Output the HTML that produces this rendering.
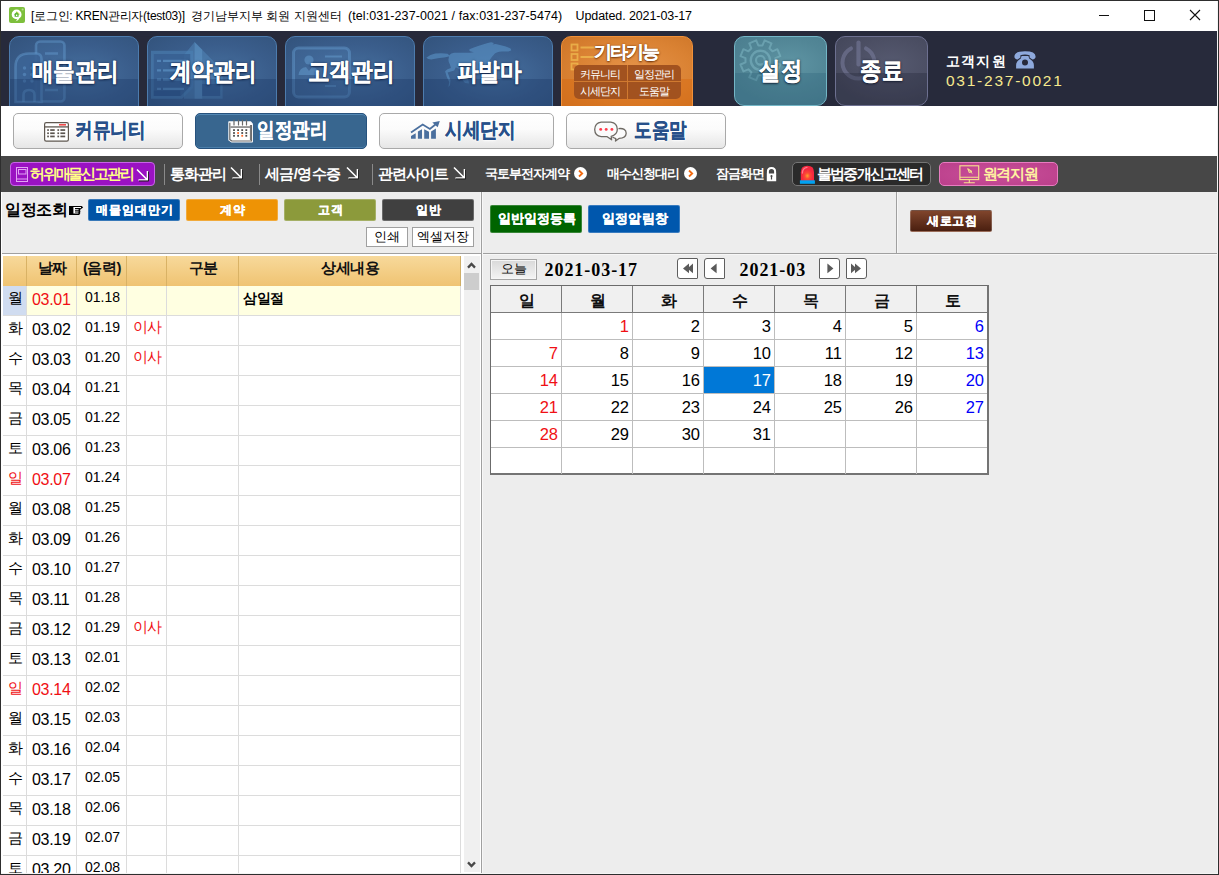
<!DOCTYPE html>
<html lang="ko">
<head>
<meta charset="utf-8">
<title>KREN</title>
<style>
*{box-sizing:border-box;margin:0;padding:0}
html,body{width:1219px;height:875px;overflow:hidden}
body{position:relative;background:#ededed;font-family:"Liberation Sans",sans-serif;color:#000;font-size:14px}
.a{position:absolute;white-space:nowrap}
.c{text-align:center}
.b{font-weight:bold}
/* window frame */
#frame{left:0;top:0;width:1219px;height:875px;border:1px solid #2e2e2e;z-index:50;pointer-events:none;box-shadow:inset -1px -1px 0 #f4f4f4}
#titlebar{left:1px;top:1px;width:1217px;height:30px;background:#fff}
#titletext{left:31px;top:9px;font-size:12px;line-height:15px;color:#000;letter-spacing:0px}
/* nav band */
#nav{left:1px;top:31px;width:1217px;height:75px;background:#272a3b;overflow:hidden}
.nb{top:5px;width:130px;height:86px;border-radius:10px;border:1px solid #4d7cae;overflow:hidden;
  background:radial-gradient(ellipse 70% 60% at 55% 45%,#46709f 0%,#3a5d8b 60%,#34557f 100%)}
.nb .lo{left:0;top:42px;width:130px;height:43px;background:rgba(25,55,100,.35)}
.nb .t{left:1px;top:18px;width:128px;font-size:25px;line-height:32px;font-weight:bold;color:#fff;letter-spacing:0;transform:scaleX(.865);-webkit-text-stroke:.3px #fff;
  text-shadow:0 1px 2px rgba(10,25,60,.9),0 0 3px rgba(10,25,60,.6)}

/* orange etc */
#ob{left:560px;top:5px;width:132px;height:86px;border-radius:10px;border:1px solid #f09038;overflow:hidden;
  background:radial-gradient(ellipse 75% 65% at 55% 42%,#e6944a 0%,#da8233 60%,#cc7427 100%)}
#ob .lo{left:0;top:42px;width:133px;height:43px;background:rgba(215,105,15,.45)}
#ob .t{left:0;top:4px;width:130px;font-size:18px;line-height:22px;font-weight:bold;color:#fff;letter-spacing:-2px;text-indent:-2px;-webkit-text-stroke:.25px #fff;text-shadow:0 1px 2px rgba(90,35,0,.9),0 0 2px rgba(90,35,0,.7)}
#ob .bx{left:12px;top:28px;width:107px;height:34px;border-radius:5px;background:#a2521f}
#ob .bx .h{left:0;top:16px;width:108px;height:1px;background:#d07a30}
#ob .bx .v{left:53px;top:0;width:1px;height:35px;background:#d07a30}
#ob .bx .s{font-size:11px;line-height:14px;color:#fff;letter-spacing:-1px;text-indent:-1px;width:53px;text-align:center}
.rb{top:5px;width:93px;height:70px;border-radius:10px;overflow:hidden}
.rb .t{left:0;top:16.5px;width:91px;font-size:25px;line-height:32px;font-weight:bold;color:#fff;letter-spacing:0;transform:scaleX(.85);-webkit-text-stroke:.3px #fff;text-align:center;
  text-shadow:0 1px 2px rgba(10,20,40,.9),0 0 3px rgba(10,20,40,.6)}
#setb{left:733px;border:1px solid #74b6c6;background:radial-gradient(ellipse 70% 60% at 60% 40%,#5f95a4 0%,#528696 60%,#4c7f90 100%)}
#setb .lo{left:0;top:36px;width:94px;height:34px;background:rgba(40,95,120,.28)}
#endb{left:834px;border:1px solid #6d7090;background:radial-gradient(ellipse 70% 60% at 60% 40%,#565a70 0%,#4c4f64 60%,#45485c 100%)}
#endb .lo{left:0;top:36px;width:94px;height:34px;background:rgba(25,28,45,.28)}
#cs1{left:945px;top:21px;font-size:14px;line-height:18px;font-weight:bold;color:#fff;letter-spacing:1.2px}
#cs2{left:945px;top:41px;font-size:15.5px;line-height:18px;color:#f6e98e;letter-spacing:1.75px}

/* menu items */
#pb{left:9px;top:6px;width:145px;height:24px;border-radius:4px;border:1px solid #c765e6;background:#9a12c2}
#pb .t{left:19px;top:1px;font-size:15px;line-height:20px;font-weight:bold;color:#ffff86;letter-spacing:-2.2px}
#il{left:791px;top:6px;width:139px;height:24px;border-radius:5px;border:1px solid #757575;background:#2a2a2a}
#il .t{left:24px;top:1px;font-size:15px;line-height:20px;font-weight:bold;color:#fff;letter-spacing:-1.8px}
#rs{left:938px;top:6px;width:119px;height:24px;border-radius:5px;border:1px solid #e87cc0;background:radial-gradient(ellipse 80% 90% at 50% 50%,#c9509a 0%,#b83c88 100%)}
#rs .t{left:42.5px;top:1px;font-size:15px;line-height:20px;font-weight:bold;color:#fff3a0;letter-spacing:-1.2px}
.arw{top:10px;width:13px;height:14px}
.circ{top:11px;width:13px;height:13px;border-radius:7px;background:#fff}
/* panels */
#lp{left:1px;top:192px;width:480px;height:61px;background:#ededed}
.vline{width:1px;background:#a0a0a0}
.hline{height:1px;background:#a0a0a0}
.cb{top:199px;height:22px;color:#fff;font-size:12px;line-height:20px;font-weight:bold;text-align:center;letter-spacing:1px;padding-left:2px;border-radius:2px;border:1px solid rgba(255,255,255,.22);-webkit-text-stroke:.3px #fff}
.wb{top:227px;height:20px;background:#fff;border:1px solid #a0a0a0;font-size:13px;line-height:18px;text-align:center;color:#000}

/* table */
#tbl{left:1px;top:254px;width:480px;height:619px;background:#fff;overflow:hidden}
#th{left:2px;top:2px;width:458px;height:30px;border-right:1px solid #cfae66;z-index:2;background:linear-gradient(#f7d99b 0%,#f3cd84 55%,#efc372 100%)}
#th .h{top:2px;font-size:15px;line-height:20px;font-weight:bold;color:#111;text-align:center;letter-spacing:-.5px}
#th .v{top:0;width:1px;height:30px;background:#d9b265}
.r{left:2px;width:458px;height:30px;border-bottom:1px solid #dcdcdc}
.r .d{left:0;top:0;width:24px;height:29px;font-size:15px;line-height:23px;text-align:center}
.r .dt{left:29px;top:-1px;font-size:16px;line-height:29px;letter-spacing:-.3px}
.r .lu{left:82px;top:-2px;font-size:14px;line-height:26px}
.r .ev{left:130px;top:-3.5px;font-size:15px;line-height:27px;color:#f00f14;letter-spacing:-1px}
.red{color:#f00f14}
.gv{top:32px;width:1px;height:590px;background:#dcdcdc}
#sb{left:463px;top:2px;width:16px;height:616px;background:#f0f0f0}
#sb .th{left:0;top:17px;width:15px;height:17px;background:#cdcdcd}
/* calendar */
#cal{left:490px;top:285px;width:499px;height:190px;background:#fff;border:1px solid #6b6b6b;border-right:2px solid #747474;border-bottom:2px solid #747474}
#cal .hd{left:0;top:0;width:496px;height:27px;background:#f0f0f0;border-bottom:1px solid #7a7a7a}
#cal .dh{top:3.5px;width:71px;text-align:center;font-size:16px;line-height:22px;font-weight:bold;color:#111}
#cal .hv{top:0;width:1px;height:27px;background:#7a7a7a}
#cal .cv{top:27px;width:1px;height:161px;background:#bdbdbd}
#cal .ch{left:0;width:496px;height:1px;background:#bdbdbd}
#cal .n{width:67px;text-align:right;font-size:16.5px;line-height:26px;color:#000}
#cal .sun{color:#f00f14}
#cal .sat{color:#0000fa}
.navb{top:258px;width:21px;height:21px;background:#fff;border:1px solid #5e5e5e;border-radius:3px 1px 1px 3px}
.navb.rt{border-radius:1px 3px 3px 1px}
.ser{font-family:"Liberation Serif",serif;font-weight:bold;font-size:18px;line-height:24px;letter-spacing:.95px}
/* sub tab row */
#tabs{left:1px;top:106px;width:1217px;height:50px;background:#fff}
.tb{top:7px;height:36px;border:1px solid #a9a9a9;border-radius:5px;background:linear-gradient(#ffffff 0%,#fbfbfb 45%,#e6e6e6 100%)}
.tb.on{background:#38668f;border-color:#27527d;box-shadow:inset 0 1px 0 #5388b4,inset 0 -1px 0 #4a7eaa}
.tb .t{top:2px;font-size:21px;line-height:28px;font-weight:bold;color:#27508a;letter-spacing:0;transform:scaleX(.835);transform-origin:0 0;-webkit-text-stroke:.3px #27508a;text-shadow:0 0 2px #fff,0 0 3px #fff,0 0 4px #fff}
.tb.on .t{color:#fff;-webkit-text-stroke:.3px #fff;text-shadow:none}
/* menu bar */
#menu{left:1px;top:156px;width:1217px;height:36px;background:#474747}
#menu .m{top:8px;font-size:15px;line-height:20px;font-weight:bold;color:#fff;letter-spacing:-1px}
#menu .s{top:9px;font-size:13px;line-height:18px;font-weight:bold;color:#fff;letter-spacing:-1px}
#menu .sep{top:8px;width:1px;height:21px;background:#8a8a8a}
</style>
</head>
<body>
<div id="titlebar" class="a"></div>
<svg class="a" style="left:9px;top:7px" width="16" height="16" viewBox="0 0 16 16"><rect x="0" y="0" width="16" height="16" rx="2" fill="#7dbf3c"/><circle cx="7.6" cy="7.4" r="4.9" fill="#fff"/><path d="M8.6 11 Q8.2 13.4 6.6 14.2 Q9.8 13.8 10.4 10.6Z" fill="#fff"/><path d="M4.8 7.6 L7.6 5 L10.4 7.6 L9.6 7.6 L9.6 9.8 L5.6 9.8 L5.6 7.6Z" fill="#5cb531"/><rect x="7" y="7.6" width="1.3" height="1.4" fill="#fff"/><path d="M7.6 4.6 L10.6 7.2" stroke="#c4dd3c" stroke-width="1" fill="none"/><circle cx="13.6" cy="2.4" r="1" fill="#b5dc8a"/></svg>
<div id="titletext" class="a"><span class="a" style="left:0;letter-spacing:-.25px">[로그인: KREN관리자(test03)]</span><span class="a" style="left:160px">경기남부지부 회원 지원센터</span><span class="a" style="left:317px;font-size:12.5px;letter-spacing:.08px">(tel:031-237-0021 / fax:031-237-5474)</span><span class="a" style="left:544.5px;font-size:12.5px;letter-spacing:-.09px">Updated. 2021-03-17</span></div>
<svg class="a" style="left:1095px;top:5px" width="112" height="20" viewBox="0 0 112 20" fill="none" stroke="#111" stroke-width="1"><path d="M4 10.5 H14"/><rect x="49.5" y="5.5" width="10" height="10"/><path d="M95 5 L105 15 M105 5 L95 15" stroke-width="1.1"/></svg>

<div id="nav" class="a">
  <div class="a nb" style="left:8px"><svg class="a" style="left:0;top:0" width="129" height="84" viewBox="0 0 129 84" fill="none" stroke="#6aa3d6" stroke-opacity=".42" stroke-width="2.6"><rect x="26" y="4.5" width="28.5" height="60" rx="4" fill="#5e97cc" fill-opacity=".14"/><path d="M35 16.5 H48 M35 53 H48" stroke-width="2.4"/><path d="M5.5 65 V30 Q5.5 16.5 19 16.5 H26 Q31.5 16.5 31.5 22 V65 Z" fill="#3c6496" fill-opacity=".9"/><path d="M13.5 65 V58 Q13.5 53 19 53 Q24.5 53 24.5 58 V65"/><g stroke="none" fill="#6aa3d6" fill-opacity=".42"><circle cx="14.5" cy="31" r="1.7"/><circle cx="22" cy="31" r="1.7"/><circle cx="14.5" cy="37.5" r="1.7"/><circle cx="22" cy="37.5" r="1.7"/><circle cx="14.5" cy="44" r="1.7"/><circle cx="22" cy="44" r="1.7"/></g></svg><div class="a lo"></div><div class="a t c">매물관리</div></div>
  <div class="a nb" style="left:146px"><svg class="a" style="left:0;top:0" width="129" height="84" viewBox="0 0 129 84"><path d="M46.6 5 L74.6 33.5 V61.8 H36 V18 Z" fill="#5c98cc" fill-opacity=".36"/><path d="M46.6 5 L54.2 12.8 V61.8 H46.6 Z" fill="#6fb0e0" fill-opacity=".3"/><rect x="54.2" y="47" width="18" height="12" fill="#2f568a" fill-opacity=".7"/><path d="M3 13.8 H45 V51 L34.2 61.8 H3 Z" fill="#4a7fb3" fill-opacity=".62"/><path d="M5.8 17 H42.2 V49.6 L32.8 59 H5.8 Z" fill="#345a8b" fill-opacity=".66"/><rect x="5.8" y="53.6" width="26.4" height="5.4" fill="#2c5083" fill-opacity=".55"/><path d="M9 23.8 H13 M15 23.8 H40 M9 33.4 H13 M15 33.4 H40 M9 42.6 H13 M15 42.6 H40 M9 51.8 H13 M15 51.8 H36" stroke="#6aa3d6" stroke-opacity=".5" stroke-width="2.2" fill="none"/></svg><div class="a lo"></div><div class="a t c">계약관리</div></div>
  <div class="a nb" style="left:284px"><svg class="a" style="left:0;top:0" width="129" height="84" viewBox="0 0 129 84" fill="none"><rect x="7.5" y="11" width="56" height="49" rx="5" stroke="#6aa3d6" stroke-opacity=".42" stroke-width="3" fill="#5e97cc" fill-opacity=".16"/><circle cx="23" cy="23" r="4.6" fill="#6aa3d6" fill-opacity=".45"/><path d="M12.5 38 Q13.5 30.5 20 30 L23 34 L26 30 Q32.5 30.5 33.5 38 Z" fill="#6aa3d6" fill-opacity=".45"/><path d="M39 19.5 H56 M39 49 H50" stroke="#6aa3d6" stroke-opacity=".45" stroke-width="2.2"/></svg><div class="a lo"></div><div class="a t c">고객관리</div></div>
  <div class="a nb" style="left:422px"><svg class="a" style="left:0;top:0" width="129" height="84" viewBox="0 0 129 84"><path d="M2.3 20.7 Q6 17.5 11.3 16.6 Q18 15.8 23.6 16.8 L25.2 18.3 Q27 16.2 30.2 15.8 L40 15.8 Q45 15.9 49.9 15.2 L46 14.3 Q44.5 13 46 12 L49.9 10.5 Q55 8.5 59.7 7.2 Q64 5.5 67.1 5.2 L70 6 L68.5 7.4 Q71 6.9 72.8 7.2 Q77 8 81 9.3 Q84.5 10.4 86.8 11.7 L87.2 13.4 L84.3 14.6 H77.8 Q75 14.7 72.8 15.4 Q70.6 16.3 69.6 17.9 Q68 19.5 67.1 21.1 Q65.5 23.5 63.8 26 L62 31 L52 34 L44 41 L45 46.5 L41 46 L38.5 43 L40 36 L36 32.5 L31.8 30.2 L30.2 33.5 L23.6 35.5 L24.4 37.6 L26.5 43.3 L26 48.2 L24.4 49.9 L25.2 44.9 L22.8 40 L21.1 34.3 Q23 32 26.9 31 L26 27.7 Q24.4 25 24.4 22.8 L25 19.5 Q20 20.5 15.4 21.1 Q11 22 7.2 22.4 Q4 22.3 2.3 20.7Z" fill="#5a92c6" fill-opacity=".6"/></svg><div class="a lo"></div><div class="a t c">파발마</div></div>
  <div id="ob" class="a"><svg class="a" style="left:0;top:0" width="60" height="40" viewBox="0 0 60 40" fill="none" stroke="#f0bc50" stroke-opacity=".75" stroke-width="1.8"><rect x="9.5" y="7.5" width="6" height="6"/><rect x="9.5" y="17" width="6" height="6"/><rect x="9.5" y="26.5" width="6" height="6"/><path d="M18.5 10.5 H35 M18.5 20 H35"/></svg><div class="a lo"></div><div class="a t c">기타기능</div>
    <div class="a bx"><div class="a h"></div><div class="a v"></div>
      <div class="a s" style="left:0;top:2px">커뮤니티</div><div class="a s" style="left:54px;top:2px">일정관리</div>
      <div class="a s" style="left:0;top:19px">시세단지</div><div class="a s" style="left:54px;top:19px">도움말</div>
    </div>
  </div>
  <div id="setb" class="a rb"><svg class="a" style="left:0;top:0" width="92" height="68" viewBox="0 0 92 68" fill="none" stroke="#8cc6d2" stroke-opacity=".42" stroke-width="2" stroke-linejoin="round"><path d="M40.3 25.4 L45.3 27.5 L42.4 34.4 L37.4 32.3 L34.4 35.3 L36.5 40.3 L29.6 43.2 L27.5 38.2 L23.3 38.2 L21.2 43.2 L14.3 40.3 L16.4 35.3 L13.4 32.3 L8.4 34.4 L5.5 27.5 L10.5 25.4 L10.5 21.2 L5.5 19.1 L8.4 12.2 L13.4 14.3 L16.4 11.3 L14.3 6.3 L21.2 3.4 L23.3 8.4 L27.5 8.4 L29.6 3.4 L36.5 6.3 L34.4 11.3 L37.4 14.3 L42.4 12.2 L45.3 19.1 L40.3 21.2Z"/><circle cx="25.4" cy="23.3" r="9.6" stroke-width="2.4"/><circle cx="25.4" cy="23.3" r="4.4" stroke-width="2.2"/></svg><div class="a lo"></div><div class="a t">설정</div></div>
  <div id="endb" class="a rb"><svg class="a" style="left:0;top:0" width="92" height="68" viewBox="0 0 92 68" fill="none" stroke="#7a7d9e" stroke-opacity=".55" stroke-width="4" stroke-linecap="round"><path d="M15 11.4 A16 16 0 1 0 30 11.4"/><path d="M22.5 5.5 V27.5" stroke-width="4.2"/></svg><div class="a lo"></div><div class="a t">종료</div></div>
  <div id="cs1" class="a">고객지원</div><svg class="a" style="left:1013px;top:19.5px" width="22" height="18" viewBox="0 0 22 18"><path d="M0.4 5.6 Q0.4 0.3 11 0.3 Q21.6 0.3 21.6 5.6 Q21.6 8.2 18.4 8.6 L15.6 6.4 V4.2 Q11 2.8 6.4 4.2 V6.4 L3.6 8.6 Q0.4 8.2 0.4 5.6Z" fill="#8ea9dc"/><path fill-rule="evenodd" d="M7.6 4.9 H14.4 L15.2 7.6 Q19.9 10.6 19.9 14 V17.6 H2.1 V14 Q2.1 10.6 6.8 7.6Z M11 8.6 A3 3 0 1 0 11 14.6 A3 3 0 1 0 11 8.6Z" fill="#8ea9dc"/></svg>
  <div id="cs2" class="a">031-237-0021</div>
</div>

<div id="tabs" class="a">
  <div class="a tb" style="left:12px;width:170px"><div class="a t" style="left:61px">커뮤니티</div></div>
  <div class="a tb on" style="left:194px;width:172px"><div class="a t" style="left:61px">일정관리</div></div>
  <div class="a tb" style="left:378px;width:175px"><div class="a t" style="left:65px">시세단지</div></div>
  <div class="a tb" style="left:565px;width:160px"><div class="a t" style="left:67px">도움말</div></div>
<svg class="a" style="left:43px;top:16px" width="25" height="20" viewBox="0 0 25 20"><rect x="0.6" y="0.6" width="23.8" height="18.6" rx="1.6" fill="#fff" stroke="#5f5850" stroke-width="1.2"/><path d="M0.6 4.9 H24.4" stroke="#5f5850" stroke-width="1.3"/><rect x="15" y="2" width="7" height="1.6" fill="#f04a4a"/><g fill="#5a544e"><rect x="3.2" y="7.2" width="1.7" height="1.7"/><rect x="6.2" y="7.2" width="4.5" height="1.7"/><rect x="13.4" y="7.2" width="1.7" height="1.7"/><rect x="16.4" y="7.2" width="4.8" height="1.7"/><rect x="3.2" y="10.4" width="1.7" height="1.7"/><rect x="6.2" y="10.4" width="4.5" height="1.7"/><rect x="13.4" y="10.4" width="1.7" height="1.7"/><rect x="16.4" y="10.4" width="4.8" height="1.7"/><rect x="3.2" y="13.6" width="1.7" height="1.7"/><rect x="6.2" y="13.6" width="4.5" height="1.7"/><rect x="13.4" y="13.6" width="1.7" height="1.7"/><rect x="16.4" y="13.6" width="4.8" height="1.7"/></g></svg><svg class="a" style="left:227px;top:13px" width="25" height="24" viewBox="0 0 25 24"><path d="M1 3 H22.5 L24.2 5 V22.8 H3.5 L1 21 Z" fill="#fff" stroke="#fff" stroke-width="1.4" stroke-linejoin="round"/><path d="M1.8 3.8 V20.6 L3.8 22 H23.4 V6" fill="none" stroke="#6a6a6a" stroke-width="1.2"/><path d="M22.6 6 V21" stroke="#777" stroke-width="1.4"/><rect x="2.4" y="7.2" width="19.6" height="1.7" fill="#8a8a8a"/><path d="M6 1 V6 M10.5 1 V6 M14.5 1 V6 M18.5 1 V6" stroke="#6a6a6a" stroke-width="1.2" stroke-linecap="round"/><g fill="#4c4c4c"><rect x="5.1" y="10.2" width="1.8" height="1.8"/><rect x="9.2" y="10.2" width="1.8" height="1.8"/><rect x="13.3" y="10.2" width="1.8" height="1.8"/><rect x="17.4" y="10.2" width="1.8" height="1.8"/><rect x="5.1" y="13.1" width="1.8" height="1.8"/><rect x="13.3" y="13.1" width="1.8" height="1.8"/><rect x="17.4" y="13.1" width="1.8" height="1.8"/><rect x="5.1" y="15.9" width="1.8" height="1.8"/><rect x="9.2" y="15.9" width="1.8" height="1.8"/><rect x="17.4" y="15.9" width="1.8" height="1.8"/></g><rect x="9.2" y="13.1" width="1.8" height="1.8" fill="#ff6a2a"/><rect x="13.3" y="15.9" width="1.8" height="1.8" fill="#ff6a2a"/></svg><svg class="a" style="left:409px;top:14px" width="31" height="20" viewBox="0 0 31 20"><g fill="#4a6f9e"><path d="M1 16.1 L5.7 13.3 V18.7 H1Z"/><path d="M7.9 11.5 L12 9.2 V18.7 H7.9Z"/><path d="M14.2 9.2 L19 11.8 V18.7 H14.2Z"/><path d="M21.1 11.5 L25.9 8.5 V18.7 H21.1Z"/><path d="M22.3 2.4 L29.8 1.1 L27.7 7.2Z"/></g><path d="M1 12.4 L12.7 4.6 L19.9 9 L27 3.2" fill="none" stroke="#4a6f9e" stroke-width="1.8"/></svg><svg class="a" style="left:592px;top:15px" width="36" height="22" viewBox="0 0 36 22" fill="#fbfbfb" stroke="#6e6a64" stroke-width="1.3" stroke-linejoin="round"><path d="M25.5 7.6 Q33 6.8 33.2 12.2 Q33 17 26 17.4 L22.5 20 L22.8 17.6 Q20.5 16.8 19.5 16"/><path d="M8.2 1.2 H17.8 Q24.2 2 24.3 8.4 Q24.2 13.4 18.2 15.4 L18.6 18.8 L14.2 15.7 H8.2 Q1.9 15 1.7 8.6 Q1.9 2 8.2 1.2Z"/><g fill="#ff3c4c" stroke="none"><circle cx="7.7" cy="8.4" r="1.45"/><circle cx="13.2" cy="8.4" r="1.45"/><circle cx="18.9" cy="8.4" r="1.45"/></g></svg>
</div>
<div id="menu" class="a">
  <div id="pb" class="a"><svg class="a" style="left:5px;top:4px" width="13" height="16" viewBox="0 0 13 16" fill="none" stroke="#e2a4f4" stroke-width="1"><rect x="0.5" y="0.5" width="11" height="14"/><rect x="2.5" y="2.5" width="7.5" height="4.5"/><path d="M0.5 12 H11.5"/></svg><div class="a t">허위매물신고관리</div><svg class="a arw" style="left:125px;top:5px" viewBox="0 0 13 14"><path d="M1 1.5 L11 11.5 M2.5 12 H11.5 V3" fill="none" stroke="#fff" stroke-width="1.6"/><path d="M3 13 H12.6 V3.5" fill="none" stroke="#1a1a1a" stroke-width="1"/></svg></div>
  <div class="a sep" style="left:163px"></div>
  <div class="a m" style="left:169px">통화관리</div><svg class="a arw" style="left:229px" viewBox="0 0 13 14"><path d="M1 1.5 L11 11.5 M2.5 12 H11.5 V3" fill="none" stroke="#fff" stroke-width="1.6"/><path d="M3 13 H12.6 V3.5" fill="none" stroke="#1a1a1a" stroke-width="1"/></svg>
  <div class="a sep" style="left:258px"></div>
  <div class="a m" style="left:264px;letter-spacing:-.6px">세금/영수증</div><svg class="a arw" style="left:345px" viewBox="0 0 13 14"><path d="M1 1.5 L11 11.5 M2.5 12 H11.5 V3" fill="none" stroke="#fff" stroke-width="1.6"/><path d="M3 13 H12.6 V3.5" fill="none" stroke="#1a1a1a" stroke-width="1"/></svg>
  <div class="a sep" style="left:371px"></div>
  <div class="a m" style="left:377px">관련사이트</div><svg class="a arw" style="left:452px" viewBox="0 0 13 14"><path d="M1 1.5 L11 11.5 M2.5 12 H11.5 V3" fill="none" stroke="#fff" stroke-width="1.6"/><path d="M3 13 H12.6 V3.5" fill="none" stroke="#1a1a1a" stroke-width="1"/></svg>
  <div class="a s" style="left:484px">국토부전자계약</div><div class="a circ" style="left:573px"><svg width="13" height="13" viewBox="0 0 13 13"><path d="M5 3.5 L8.2 6.5 L5 9.5" fill="none" stroke="#f26a10" stroke-width="1.8"/></svg></div>
  <div class="a s" style="left:606px">매수신청대리</div><div class="a circ" style="left:683px"><svg width="13" height="13" viewBox="0 0 13 13"><path d="M5 3.5 L8.2 6.5 L5 9.5" fill="none" stroke="#f26a10" stroke-width="1.8"/></svg></div>
  <div class="a s" style="left:715px">잠금화면</div><svg class="a" style="left:765px;top:11px" width="11" height="15" viewBox="0 0 11 15"><path d="M1.9 7 V4.6 Q1.9 1 5.5 1 Q9.1 1 9.1 4.6 V7" fill="none" stroke="#fff" stroke-width="2"/><path fill-rule="evenodd" d="M0.8 6.4 H10.2 V14.2 H0.8Z M5.5 8 A1.1 1.1 0 0 0 4.9 10 V12.6 H6.1 V10 A1.1 1.1 0 0 0 5.5 8Z" fill="#fff"/></svg>
  <div id="il" class="a"><svg class="a" style="left:6px;top:1px" width="17" height="20" viewBox="0 0 17 20"><defs><radialGradient id="sg" cx="50%" cy="66%" r="42%"><stop offset="0" stop-color="#ffa42a"/><stop offset=".45" stop-color="#fb4a36"/><stop offset="1" stop-color="#f5283f"/></radialGradient></defs><path d="M1.8 17 V8.2 Q1.8 1.8 8.4 1.8 Q15 1.8 15 8.2 V17Z" fill="url(#sg)"/><path d="M3.4 9 Q3.6 4 8 3.4" fill="none" stroke="#ff7d8c" stroke-width="1.3" stroke-linecap="round"/><rect x="0.9" y="16.3" width="15" height="3.5" fill="#00a2f2"/></svg><div class="a t">불법중개신고센터</div></div>
  <div id="rs" class="a"><svg class="a" style="left:19px;top:2px" width="21" height="19" viewBox="0 0 21 19" fill="none" stroke="#f7e38d" stroke-width="1.1"><rect x="0.9" y="0.8" width="18.8" height="13.8"/><path d="M0.9 12.3 H19.7 M10.3 14.6 V17.6 M4.8 17.7 H15.8" /><path d="M8.2 3.6 L13.4 8.6 M9 3.8 L10.2 7.6 L13 6.4Z" stroke-width="1"/></svg><div class="a t">원격지원</div></div>
</div>

<div id="lp" class="a"></div>
<div class="a vline" style="left:481px;top:192px;height:682px"></div>
<div class="a vline" style="left:896px;top:192px;height:62px"></div>
<div class="a hline" style="left:2px;top:253px;width:479px;height:2px"></div><div class="a hline" style="left:482px;top:253px;width:736px;height:1px"></div><div class="a" style="left:482px;top:254px;width:736px;height:1px;background:#f7f7f7"></div><div class="a" style="left:482px;top:192px;width:1px;height:681px;background:#f7f7f7"></div><div class="a" style="left:480px;top:192px;width:1px;height:61px;background:#f7f7f7"></div><div class="a" style="left:897px;top:192px;width:1px;height:61px;background:#f7f7f7"></div><div class="a" style="left:1px;top:192px;width:1px;height:64px;background:#fff"></div>

<div class="a b" style="left:5px;top:200px;font-family:'Liberation Serif',serif;font-size:16px;line-height:20px;letter-spacing:-.3px">일정조회</div><svg class="a" style="left:69px;top:206px" width="15" height="9" viewBox="0 0 15 9"><path d="M0 0.1 H12.6 L14.2 1.3 L12.6 2.7 H11.4 L11.6 3.5 L11 4.4 L11.5 5.3 L11 6.2 L11.4 7.1 L10.2 8.9 H0Z" fill="#000"/><path d="M4.4 1.1 H12 V2 H6 V2.9 H9.6 V3.8 H6 V4.7 H9.6 V5.6 H6 V6.5 H9.4 V7.6 H4.4Z" fill="#fff"/></svg>
<div class="a cb" style="left:88px;width:92px;background:#0054a6">매물임대만기</div>
<div class="a cb" style="left:186px;width:92px;background:#ee9305">계약</div>
<div class="a cb" style="left:284px;width:92px;background:#8c9a3b">고객</div>
<div class="a cb" style="left:382px;width:92px;background:#404040">일반</div>
<div class="a wb" style="left:366px;width:42px">인쇄</div>
<div class="a wb" style="left:412px;width:62px">엑셀저장</div>

<div class="a cb" style="left:490px;top:205px;width:92px;height:28px;line-height:26px;background:#006400;font-size:12.5px;letter-spacing:0">일반일정등록</div>
<div class="a cb" style="left:588px;top:205px;width:92px;height:28px;line-height:26px;background:#0057ad;font-size:12.5px;letter-spacing:.4px">일정알림창</div>
<div class="a cb" style="left:910px;top:210px;width:82px;height:22px;line-height:20px;background:linear-gradient(#80452c,#4a1f10);font-size:12px;letter-spacing:.8px;text-indent:.8px">새로고침</div>

<div id="tbl" class="a">
<div id="th" class="a">
  <div class="a h" style="left:24px;width:50px">날짜</div><div class="a h" style="left:74px;width:50px">(음력)</div><div class="a h" style="left:164px;width:72px">구분</div><div class="a h" style="left:236px;width:222px">상세내용</div>
  <div class="a v" style="left:23px"></div><div class="a v" style="left:73px"></div><div class="a v" style="left:123px"></div><div class="a v" style="left:163px"></div><div class="a v" style="left:235px"></div>
</div>
<div class="a r" style="top:32px;background:#ffffe1;"><div class="a d" style="background:#d0dcf0;">월</div><div class="a dt red">03.01</div><div class="a lu">01.18</div><div class="a b" style="left:240px;top:0;font-size:14px;line-height:25px;letter-spacing:-.5px">삼일절</div></div>
<div class="a r" style="top:62px;"><div class="a d" style="">화</div><div class="a dt">03.02</div><div class="a lu">01.19</div><div class="a ev">이사</div></div>
<div class="a r" style="top:92px;"><div class="a d" style="">수</div><div class="a dt">03.03</div><div class="a lu">01.20</div><div class="a ev">이사</div></div>
<div class="a r" style="top:122px;"><div class="a d" style="">목</div><div class="a dt">03.04</div><div class="a lu">01.21</div></div>
<div class="a r" style="top:152px;"><div class="a d" style="">금</div><div class="a dt">03.05</div><div class="a lu">01.22</div></div>
<div class="a r" style="top:182px;"><div class="a d" style="">토</div><div class="a dt">03.06</div><div class="a lu">01.23</div></div>
<div class="a r" style="top:212px;"><div class="a d red" style="">일</div><div class="a dt red">03.07</div><div class="a lu">01.24</div></div>
<div class="a r" style="top:242px;"><div class="a d" style="">월</div><div class="a dt">03.08</div><div class="a lu">01.25</div></div>
<div class="a r" style="top:272px;"><div class="a d" style="">화</div><div class="a dt">03.09</div><div class="a lu">01.26</div></div>
<div class="a r" style="top:302px;"><div class="a d" style="">수</div><div class="a dt">03.10</div><div class="a lu">01.27</div></div>
<div class="a r" style="top:332px;"><div class="a d" style="">목</div><div class="a dt">03.11</div><div class="a lu">01.28</div></div>
<div class="a r" style="top:362px;"><div class="a d" style="">금</div><div class="a dt">03.12</div><div class="a lu">01.29</div><div class="a ev">이사</div></div>
<div class="a r" style="top:392px;"><div class="a d" style="">토</div><div class="a dt">03.13</div><div class="a lu">02.01</div></div>
<div class="a r" style="top:422px;"><div class="a d red" style="">일</div><div class="a dt red">03.14</div><div class="a lu">02.02</div></div>
<div class="a r" style="top:452px;"><div class="a d" style="">월</div><div class="a dt">03.15</div><div class="a lu">02.03</div></div>
<div class="a r" style="top:482px;"><div class="a d" style="">화</div><div class="a dt">03.16</div><div class="a lu">02.04</div></div>
<div class="a r" style="top:512px;"><div class="a d" style="">수</div><div class="a dt">03.17</div><div class="a lu">02.05</div></div>
<div class="a r" style="top:542px;"><div class="a d" style="">목</div><div class="a dt">03.18</div><div class="a lu">02.06</div></div>
<div class="a r" style="top:572px;"><div class="a d" style="">금</div><div class="a dt">03.19</div><div class="a lu">02.07</div></div>
<div class="a r" style="top:602px;"><div class="a d" style="">토</div><div class="a dt">03.20</div><div class="a lu">02.08</div></div>
<div class="a gv" style="left:25px"></div><div class="a gv" style="left:75px"></div><div class="a gv" style="left:125px"></div><div class="a gv" style="left:165px"></div><div class="a gv" style="left:237px"></div><div class="a gv" style="left:459px"></div>
<div id="sb" class="a"><div class="a th"></div>
<svg class="a" style="left:3px;top:5.5px" width="9" height="7" viewBox="0 0 9 7"><path d="M1 5.6 L4.5 2 L8 5.6" fill="none" stroke="#484848" stroke-width="2.3"/></svg>
<svg class="a" style="left:3px;top:604.5px" width="9" height="7" viewBox="0 0 9 7"><path d="M1 1.4 L4.5 5 L8 1.4" fill="none" stroke="#484848" stroke-width="2.3"/></svg>
</div>
</div>
<div class="a" style="left:490px;top:259px;width:47px;height:21px;border:1px solid #a6a6a6;background:linear-gradient(#d9d9d9,#f4f4f4);box-shadow:inset 0 0 0 1px #f6f6f6;font-size:13px;line-height:18px;text-align:center;letter-spacing:-.5px">오늘</div>
<div class="a ser" style="left:544.5px;top:257.5px">2021-03-17</div>
<div class="a ser" style="left:739.5px;top:257.5px">2021-03</div>
<div class="a navb" style="left:677px"><svg width="19" height="19" viewBox="0 0 19 19" fill="#5a5a5a"><path d="M5 9.4 L11 4.6 V14.2Z"/><path d="M9.4 9.4 L15 4.6 V14.2Z"/></svg></div><div class="a navb" style="left:704px"><svg width="19" height="19" viewBox="0 0 19 19" fill="#5a5a5a"><path d="M5.6 9.4 L11.6 4.6 V14.2Z"/></svg></div><div class="a navb rt" style="left:819px"><svg width="19" height="19" viewBox="0 0 19 19" fill="#5a5a5a"><path d="M13.4 9.4 L7.4 4.6 V14.2Z"/></svg></div><div class="a navb rt" style="left:846px"><svg width="19" height="19" viewBox="0 0 19 19" fill="#5a5a5a"><path d="M14 9.4 L8 4.6 V14.2Z"/><path d="M9.6 9.4 L4 4.6 V14.2Z"/></svg></div>
<div id="cal" class="a"><div class="a hd"></div>
<div class="a dh" style="left:0px">일</div>
<div class="a dh" style="left:71px">월</div>
<div class="a dh" style="left:142px">화</div>
<div class="a dh" style="left:213px">수</div>
<div class="a dh" style="left:284px">목</div>
<div class="a dh" style="left:355px">금</div>
<div class="a dh" style="left:426px">토</div>
<div class="a hv" style="left:70px"></div><div class="a cv" style="left:70px"></div>
<div class="a hv" style="left:141px"></div><div class="a cv" style="left:141px"></div>
<div class="a hv" style="left:212px"></div><div class="a cv" style="left:212px"></div>
<div class="a hv" style="left:283px"></div><div class="a cv" style="left:283px"></div>
<div class="a hv" style="left:354px"></div><div class="a cv" style="left:354px"></div>
<div class="a hv" style="left:425px"></div><div class="a cv" style="left:425px"></div>
<div class="a ch" style="top:53px"></div>
<div class="a ch" style="top:80px"></div>
<div class="a ch" style="top:107px"></div>
<div class="a ch" style="top:134px"></div>
<div class="a ch" style="top:161px"></div>
<div class="a n sun" style="left:71px;top:27px">1</div>
<div class="a n" style="left:142px;top:27px">2</div>
<div class="a n" style="left:213px;top:27px">3</div>
<div class="a n" style="left:284px;top:27px">4</div>
<div class="a n" style="left:355px;top:27px">5</div>
<div class="a n sat" style="left:426px;top:27px">6</div>
<div class="a n sun" style="left:0px;top:54px">7</div>
<div class="a n" style="left:71px;top:54px">8</div>
<div class="a n" style="left:142px;top:54px">9</div>
<div class="a n" style="left:213px;top:54px">10</div>
<div class="a n" style="left:284px;top:54px">11</div>
<div class="a n" style="left:355px;top:54px">12</div>
<div class="a n sat" style="left:426px;top:54px">13</div>
<div class="a n sun" style="left:0px;top:81px">14</div>
<div class="a n" style="left:71px;top:81px">15</div>
<div class="a n" style="left:142px;top:81px">16</div>
<div class="a" style="left:213px;top:81px;width:70px;height:26px;background:#0078d7"></div>
<div class="a n" style="left:213px;top:81px;color:#fff">17</div>
<div class="a n" style="left:284px;top:81px">18</div>
<div class="a n" style="left:355px;top:81px">19</div>
<div class="a n sat" style="left:426px;top:81px">20</div>
<div class="a n sun" style="left:0px;top:108px">21</div>
<div class="a n" style="left:71px;top:108px">22</div>
<div class="a n" style="left:142px;top:108px">23</div>
<div class="a n" style="left:213px;top:108px">24</div>
<div class="a n" style="left:284px;top:108px">25</div>
<div class="a n" style="left:355px;top:108px">26</div>
<div class="a n sat" style="left:426px;top:108px">27</div>
<div class="a n sun" style="left:0px;top:135px">28</div>
<div class="a n" style="left:71px;top:135px">29</div>
<div class="a n" style="left:142px;top:135px">30</div>
<div class="a n" style="left:213px;top:135px">31</div>
</div>
<div id="frame" class="a"></div>
</body>
</html>
